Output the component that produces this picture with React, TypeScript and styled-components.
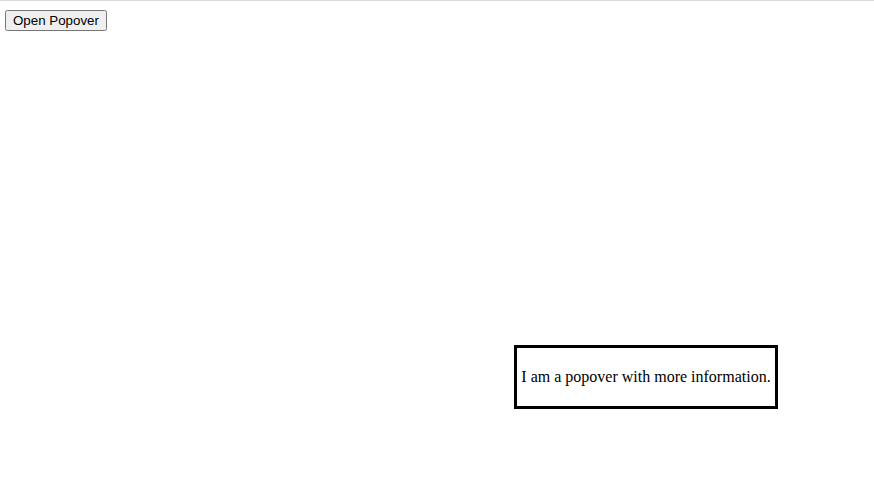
import React, {useState} from "react";
import styled, {createGlobalStyle} from "styled-components";

const GlobalStyle = createGlobalStyle`
    html, body {
        margin: 0;
        padding: 0;
        background: #fff;
    }
`;

const App: React.FC = () => {
    const [open, setOpen] = useState(true);

    return (
        <Page>
            <GlobalStyle/>
            <OpenButton onClick={() => setOpen(!open)}>Open Popover</OpenButton>
            {open && (
                <Popover>
                    <PopoverText>I am a popover with more information.</PopoverText>
                </Popover>
            )}
        </Page>
    );
};

const Page = styled.div`
    position: relative;
    width: 874px;
    height: 497px;
    box-sizing: border-box;
    border-top: 1px solid #dadada;
    padding: 9px 5px;
`;

const OpenButton = styled.button`
    font-family: "Liberation Sans", Arial, sans-serif;
    font-size: 13.333px;
    color: #000;
    padding: 1px 6px;
    margin: 0;
    cursor: pointer;
`;

// lies over the page, like a real popover
const Popover = styled.div`
    position: absolute;
    left: 514px;
    top: 344px;
    width: 264px;
    height: 64px;
    box-sizing: border-box;
    border: 3px solid #000;
    background: #fff;
    display: flex;
    align-items: center;
    justify-content: center;
`;

const PopoverText = styled.p`
    margin: 0;
    font-family: "Liberation Serif", "Times New Roman", serif;
    font-size: 16px;
    color: #000;
    white-space: nowrap;
`;

export default App;
